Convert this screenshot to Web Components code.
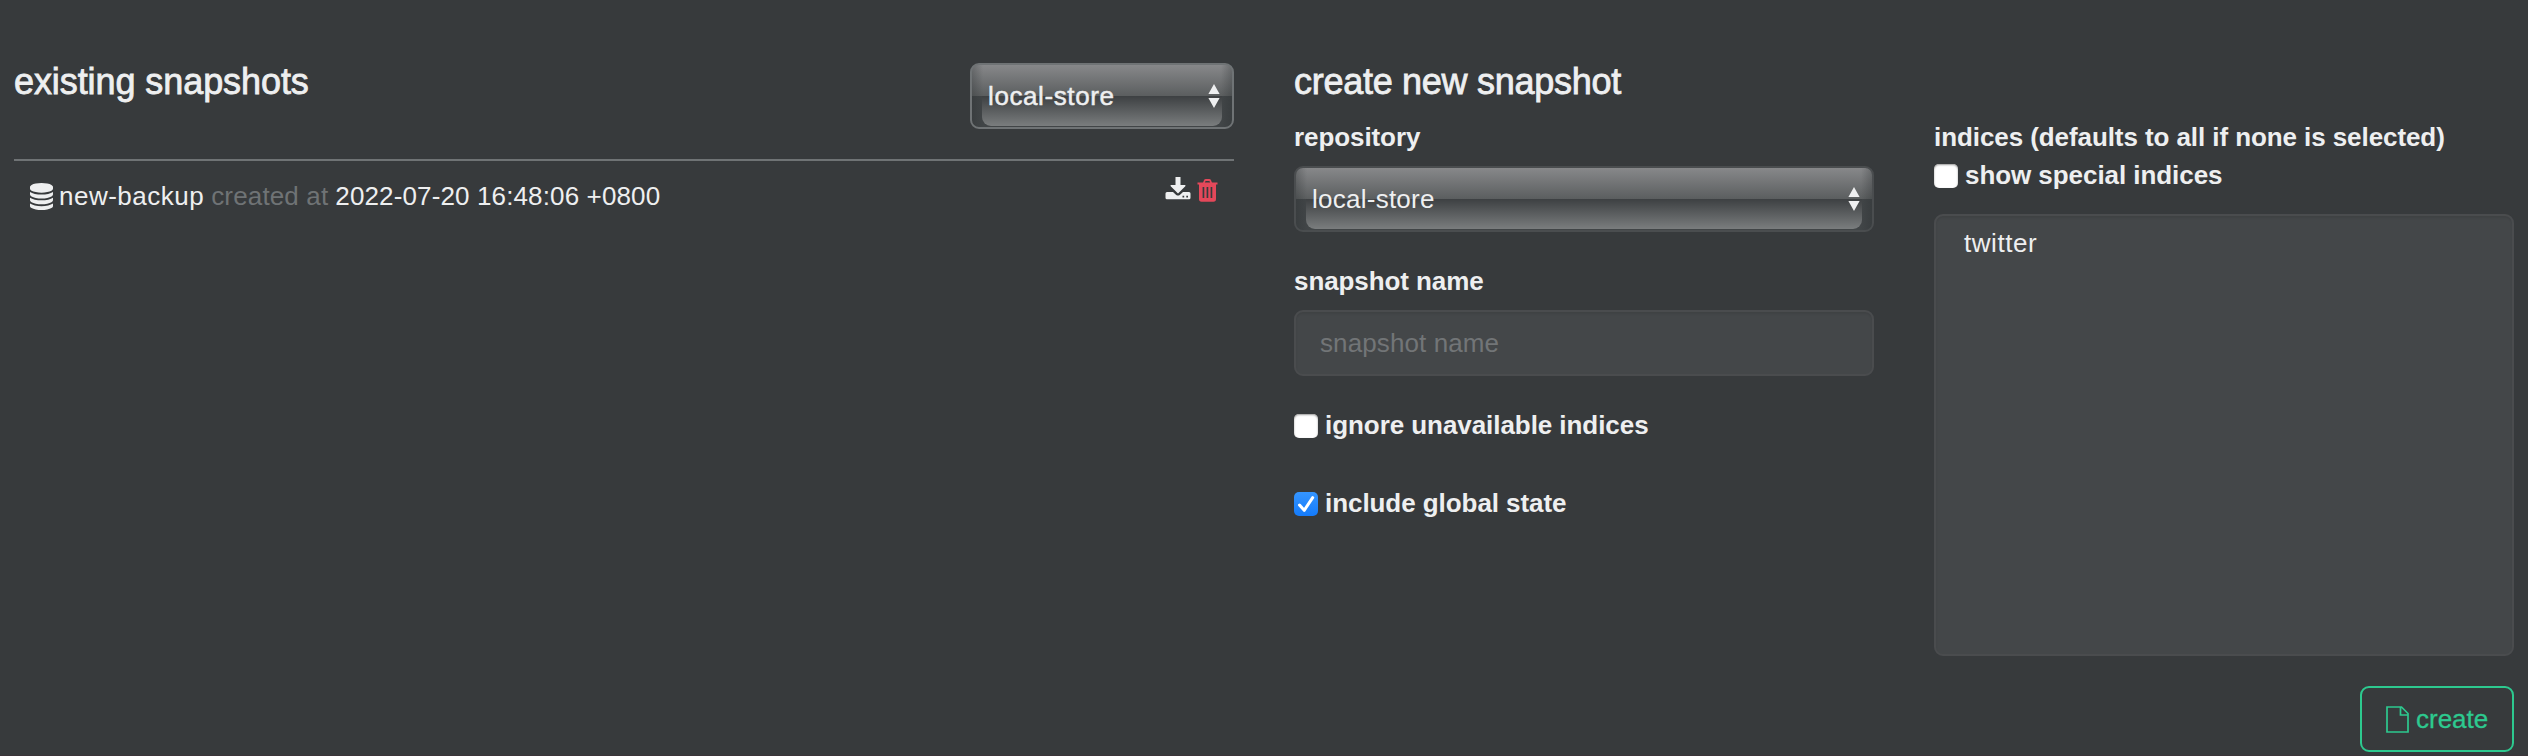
<!DOCTYPE html>
<html lang="en">
<head>
<meta charset="utf-8">
<title>snapshots</title>
<style>
html,body{margin:0;height:756px;overflow:hidden;background:#373a3c}
body{font-family:"Liberation Sans",Arial,sans-serif;font-size:26px;line-height:37px;color:#eeeff0}
</style>
</head>
<body>
<snapshots-page></snapshots-page>
<script>
const define = (name, html) => customElements.define(name, class extends HTMLElement {
  constructor() {
    super();
    const t = document.createElement('template');
    t.innerHTML = html;
    this.attachShadow({ mode: 'open' }).append(t.content.cloneNode(true));
  }
});

define('section-title', `<style>
:host{display:block;font-size:36px;line-height:40px;height:40px;letter-spacing:-.08px;-webkit-text-stroke:.8px currentColor;white-space:nowrap}
</style><slot></slot>`);

define('field-label', `<style>
:host{display:block;font-weight:700;height:37px;letter-spacing:-.08px;white-space:nowrap}
</style><slot></slot>`);

define('glossy-select', `<style>
:host{display:block;box-sizing:border-box;height:66px;border:2px solid var(--edge,#4a4d4f);border-radius:9px;overflow:hidden;
 background:
  linear-gradient(90deg,rgba(40,44,46,.3),transparent 11px,transparent calc(100% - 11px),rgba(40,44,46,.3)),
  linear-gradient(#87888a,#5b5e5f) 0 0/100% 31px no-repeat,#414547}
.face{display:flex;box-sizing:border-box;height:61px;margin:0 10px;border-radius:0 0 9px 9px;align-items:center;justify-content:space-between;
 padding:1px 2px 0 var(--pad,6px);
 background:linear-gradient(#3d4042,#7a7d7e) 0 100%/100% 30px no-repeat}
svg{display:block}
</style><div class="face"><slot></slot><svg width="12" height="24" viewBox="0 0 12 24" fill="#eeeff0"><path d="M6 0l5.600 10H.4zM6 24L.4 14h11.200z"/></svg></div>`);

define('check-row', `<style>
:host{display:flex;height:37px;font-weight:700;letter-spacing:-.06px;white-space:nowrap;gap:7px}
.box{box-sizing:border-box;width:24px;height:24px;margin-top:7px;border-radius:5px;background:#fff;box-shadow:inset 0 1px 2px #999}
.box svg{display:none}
:host([checked]) .box{background:linear-gradient(#3595ff,#147bfb);box-shadow:none}
:host([checked]) svg{display:block}
</style><span class="box"><svg width="24" height="24" fill="none" stroke="#fff" stroke-width="3" stroke-linecap="round" stroke-linejoin="round"><path d="M5.500 13l4.700 5.300L18.700 5.700"/></svg></span><slot></slot>`);

define('text-field', `<style>
:host{display:flex;box-sizing:border-box;height:66px;align-items:center;border:2px solid #4a4c4e;border-radius:9px;background:#444749;color:#727577;padding:1px 0 0 24px;letter-spacing:.1px;box-shadow:inset 0 2px 2px rgba(0,0,0,.075)}
</style><slot></slot>`);

define('index-list', `<style>
:host{display:block;box-sizing:border-box;height:442px;border:2px solid #4a4c4e;border-radius:9px;background:#444749;padding:9px 28px;letter-spacing:.55px;box-shadow:inset 0 2px 2px rgba(0,0,0,.075)}
</style><slot></slot>`);

define('create-button', `<style>
:host{display:flex;box-sizing:border-box;width:154px;height:66px;border:2px solid #2dc98f;border-radius:9px;color:#2dc98f;align-items:center;padding:1px 0 0 24px;gap:7px;-webkit-text-stroke:.3px currentColor}
</style><svg width="23" height="27" fill="none" stroke="currentColor" stroke-width="1.700"><path d="M1 1h14.500L22 7.500V26H1zM14.500 1v8H22"/></svg><slot></slot>`);

define('snapshot-row', `<style>
:host{display:flex;justify-content:space-between;height:37px;padding:17px 16px 0 16px;white-space:nowrap}
.l,.r{display:flex}
.db{margin:5px 6px 0 0}
.n{letter-spacing:.5px}.m{color:#6f7375;letter-spacing:.15px;margin:0 7px}.d{letter-spacing:.13px}
.r{gap:6px;align-items:flex-start;margin-top:-1px}
</style><div class="l"><svg class="db" width="23" height="27" viewBox="0 0 1536 1792" preserveAspectRatio="none" fill="#eeeff0"><path d="M768 768q237 0 443-43t325-127v170q0 69-103 128t-280 93.500-385 34.500-385-34.500T103 896 0 768V598q119 84 325 127t443 43zm0 768q237 0 443-43t325-127v170q0 69-103 128t-280 93.500-385 34.500-385-34.500-280-93.500T0 1536v-170q119 84 325 127t443 43zm0-384q237 0 443-43t325-127v170q0 69-103 128t-280 93.500-385 34.500-385-34.500-280-93.500T0 1152V982q119 84 325 127t443 43zM768 0q208 0 385 34.500t280 93.500 103 128v128q0 69-103 128t-280 93.500T768 640t-385-34.500T103 512 0 384V256q0-69 103-128t280-93.500T768 0z"/></svg><span class="n"><slot name="name"></slot></span><span class="m"><slot></slot></span><span class="d"><slot name="date"></slot></span></div>
<div class="r"><svg width="26" height="24"><path fill="#eeeff0" d="M10.500 0h5v8h4.500q1 .5.300 1.300L13 16.500 5.700 9.300Q5 8.500 6 8h4.500zM2 15h6l3.200 3Q13 19.200 14.800 18L18 15h6q1.500 0 1.500 1.500v4.200q0 1.500-1.500 1.500H2Q.5 22.200.5 20.700v-4.200Q.5 15 2 15z"/><path fill="#373a3c" d="M17.500 18.700h1.700v1.700h-1.700zM21.300 18.700h1.700v1.700h-1.700z"/></svg><svg width="21" height="24" style="margin-top:1.500px"><path fill="none" stroke="#e4485a" stroke-width="1.800" d="M6.500 5l1.200-3.200Q8 1 9 1h3q1 0 1.300.8L14.500 5"/><path fill="#e4485a" fill-rule="evenodd" d="M.5 3.500h20v2H19V20q0 2.700-2.500 2.700h-12Q2 22.700 2 20V5.500H.5zM5.600 8v11h1.700V8zm4 0v11h1.700V8zm4 0v11h1.700V8z"/></svg></div>`);

define('snapshots-page', `<style>
:host{display:grid;grid-template-columns:1220px 580px 580px;column-gap:60px;padding:62px 14px 0;box-sizing:border-box;height:756px;border-bottom:1px solid #3b3439}
.head{display:flex;justify-content:space-between;height:97px;border-bottom:2px solid #6f7375}
.head glossy-select{width:264px;margin-top:1px;--edge:#6f7375;letter-spacing:.6px;-webkit-text-stroke:.5px currentColor}
.mid glossy-select{margin-top:10px;letter-spacing:.25px}
.mid field-label:first-of-type{margin-top:17px}
.mid .name{margin-top:31px}
text-field{margin-top:10px}
.ig{margin-top:31px}.gl{margin-top:41px}
.right{padding-top:57px}
index-list{margin-top:20px}
create-button{margin:30px 0 0 auto}
section-title.c{letter-spacing:-.28px}
</style>
<div><div class="head"><section-title>existing snapshots</section-title><glossy-select>local-store</glossy-select></div>
<snapshot-row><span slot="name">new-backup</span>created at<span slot="date">2022-07-20 16:48:06 +0800</span></snapshot-row></div>
<div class="mid"><section-title class="c">create new snapshot</section-title>
<field-label>repository</field-label><glossy-select>local-store</glossy-select>
<field-label class="name">snapshot name</field-label><text-field>snapshot name</text-field>
<check-row class="ig">ignore unavailable indices</check-row><check-row class="gl" checked>include global state</check-row></div>
<div class="right"><field-label>indices (defaults to all if none is selected)</field-label><check-row style="margin-top:1px">show special indices</check-row>
<index-list>twitter</index-list><create-button>create</create-button></div>`);
</script>
</body>
</html>
